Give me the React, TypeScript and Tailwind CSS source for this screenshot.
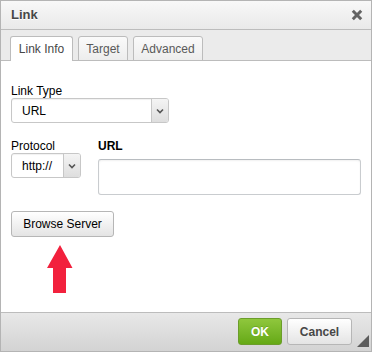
import React from "react";

const font = { fontFamily: '"Liberation Sans", Arial, sans-serif' };

function Chevron() {
  return (
    <svg width="8" height="6" viewBox="0 0 8 6">
      <path d="M1 1.5 L4 4.5 L7 1.5" stroke="#555" strokeWidth="1.6" fill="none" />
    </svg>
  );
}

function SelectBox({ value, width }: { value: string; width: string }) {
  return (
    <div
      className={`${width} h-[25px] flex border border-[#c7c7c7] rounded-[3px] bg-white shadow-[inset_0_1px_1px_rgba(0,0,0,0.06)]`}
    >
      <div className="flex-1 flex items-center pl-[10px] text-[12px] text-black">{value}</div>
      <div className="w-[17px] flex items-center justify-center border-l border-[#c7c7c7] bg-gradient-to-b from-[#f4f4f4] to-[#dedede] rounded-r-[2px]">
        <Chevron />
      </div>
    </div>
  );
}

export default function App() {
  return (
    <div
      style={font}
      className="w-[372px] h-[352px] border border-[#b4b4b4] flex flex-col bg-white relative"
    >
      {/* title bar */}
      <div className="h-[29px] flex items-center justify-between pl-[10px] pr-[8px] border-b border-[#bcbcbc] bg-gradient-to-b from-[#f8f8f8] to-[#e9e9e9]">
        <span className="text-[13px] font-bold text-[#474747] [text-shadow:0_1px_0_#fff]">Link</span>
        <svg width="12" height="12" viewBox="0 0 12 12">
          <path d="M1.8 1.8 L10.2 10.2 M10.2 1.8 L1.8 10.2" stroke="#626262" strokeWidth="3" />
        </svg>
      </div>

      {/* tabs */}
      <div className="h-[31px] flex items-end gap-[5px] pl-[9px] border-b border-[#bcbcbc] bg-[#ebebeb]">
        <div className="w-[63px] h-[25px] -mb-px flex items-center justify-center border border-b-0 border-[#bcbcbc] rounded-t-[3px] bg-white text-[12px] text-[#474747]">
          Link Info
        </div>
        <div className="w-[50px] h-[25px] -mb-px flex items-center justify-center border border-[#bcbcbc] rounded-t-[3px] bg-gradient-to-b from-[#fafafa] to-[#ededed] text-[12px] text-[#595959]">
          Target
        </div>
        <div className="w-[70px] h-[25px] -mb-px flex items-center justify-center border border-[#bcbcbc] rounded-t-[3px] bg-gradient-to-b from-[#fafafa] to-[#ededed] text-[12px] text-[#595959]">
          Advanced
        </div>
      </div>

      {/* content */}
      <div className="flex-1 px-[10px] pt-[23px] flex flex-col">
        <div className="text-[12px] leading-[14px] text-black">Link Type</div>
        <SelectBox value="URL" width="w-[158px]" />

        <div className="mt-[16px] flex">
          <div className="w-[87px] flex flex-col">
            <div className="text-[12px] leading-[14px] text-black">Protocol</div>
            <SelectBox value="http://" width="w-[70px]" />
          </div>
          <div className="flex-1 flex flex-col">
            <div className="text-[12px] leading-[14px] font-bold text-black">URL</div>
            <div className="mt-[6px] w-[263px] h-[36px] border border-[#c9cccf] border-t-[#b8bcc0] rounded-[3px] bg-white shadow-[inset_0_1px_2px_rgba(0,0,0,0.06)]" />
          </div>
        </div>

        <div className="mt-[16px]">
          <div className="w-[103px] h-[26px] flex items-center justify-center border border-[#b6b6b6] rounded-[3px] bg-gradient-to-b from-[#ffffff] to-[#e4e4e4] text-[12px] text-black">
            Browse Server
          </div>
        </div>

        <div className="mt-[8px] ml-[36px]">
          <svg width="26" height="48" viewBox="0 0 26 48">
            <path d="M13 0 L25.5 23 L19 23 L19 48 L6 48 L6 23 L0 23 Z" fill="#f2213d" />
          </svg>
        </div>
      </div>

      {/* footer */}
      <div className="h-[39px] border-t border-[#bcbcbc] bg-gradient-to-b from-[#e8e8e8] to-[#d3d3d3] flex justify-end items-start pt-[5px] pr-[19px] gap-[5px]">
        <div className="w-[44px] h-[27px] flex items-center justify-center border border-[#6b9d2a] rounded-[3px] bg-gradient-to-b from-[#8fc73c] to-[#65a914] text-[12px] font-bold text-white [text-shadow:0_-1px_0_rgba(0,0,0,0.15)]">
          OK
        </div>
        <div className="w-[65px] h-[27px] flex items-center justify-center border border-[#b6b6b6] rounded-[3px] bg-gradient-to-b from-[#ffffff] to-[#e4e4e4] text-[12px] font-bold text-[#474747]">
          Cancel
        </div>
      </div>

      <svg className="absolute right-[2px] bottom-[4px]" width="12" height="12" viewBox="0 0 12 12">
        <path d="M12 0 L12 12 L0 12 Z" fill="#5c5c5c" />
      </svg>
    </div>
  );
}
